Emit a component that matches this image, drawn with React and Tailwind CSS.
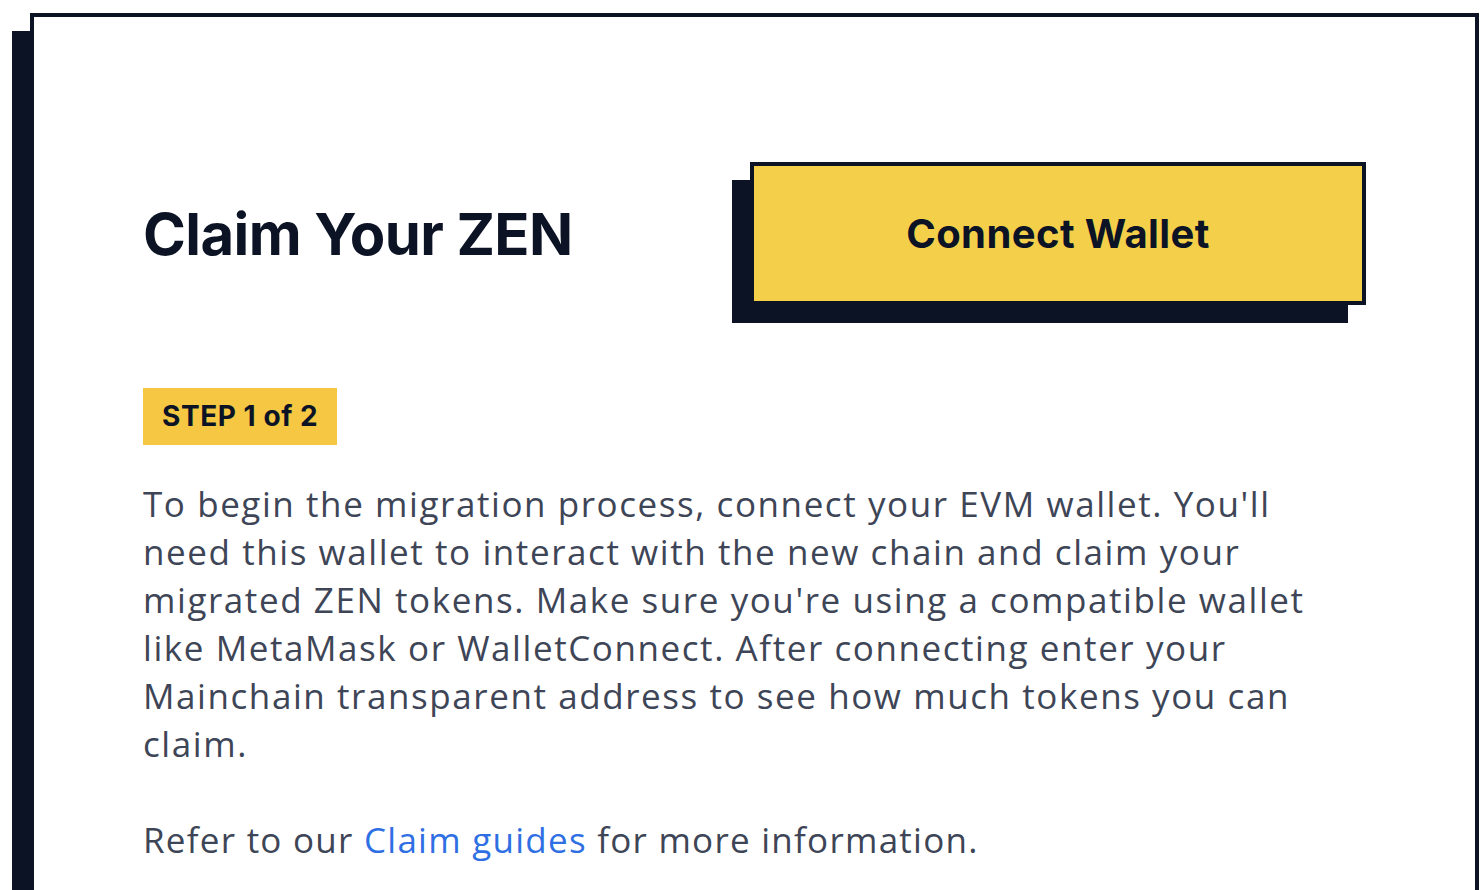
import React from 'react';

export default function App() {
  return (
    <div className="min-h-screen bg-white pl-[30px] pt-[13px] pr-[5px]" style={{ fontFamily: '"Open Sans", "Liberation Sans", sans-serif' }}>
      <div className="border-4 border-[#0b1324] bg-white shadow-[-18px_18px_0_0_#0b1324] px-[109px] pt-[145px] pb-[60px]">
        <div className="flex items-center justify-between">
          <h1 className="font-['Inter'] text-[58px] font-bold tracking-[-0.01em] text-[#0b1324] leading-none">Claim Your ZEN</h1>
          <button className="w-[616px] h-[143px] border-4 border-[#0b1324] bg-[#f4cf4a] shadow-[-18px_18px_0_0_#0b1324] font-['Inter'] text-[40px] font-bold tracking-[0.01em] text-[#0b1324]">
            Connect Wallet
          </button>
        </div>

        <div className="mt-[83px] inline-block bg-[#f5c743] px-[19px] h-[57px] leading-[57px] font-['Inter'] text-[28px] font-bold tracking-[0.02em] text-[#0b1324]">
          STEP 1 of 2
        </div>

        <p className="mt-[35px] text-[35px] leading-[48px] tracking-[0.045em] text-[#3d4556]">
          To begin the migration process, connect your EVM wallet. You'll<br />
          need this wallet to interact with the new chain and claim your<br />
          migrated ZEN tokens. Make sure you're using a compatible wallet<br />
          like MetaMask or WalletConnect. After connecting enter your<br />
          Mainchain transparent address to see how much tokens you can<br />
          claim.
        </p>

        <p className="mt-[48px] text-[35px] leading-[48px] tracking-[0.036em] text-[#3d4556]">
          Refer to our <a href="#" className="text-[#2f6fe4]">Claim guides</a> for more information.
        </p>
      </div>
    </div>
  );
}
